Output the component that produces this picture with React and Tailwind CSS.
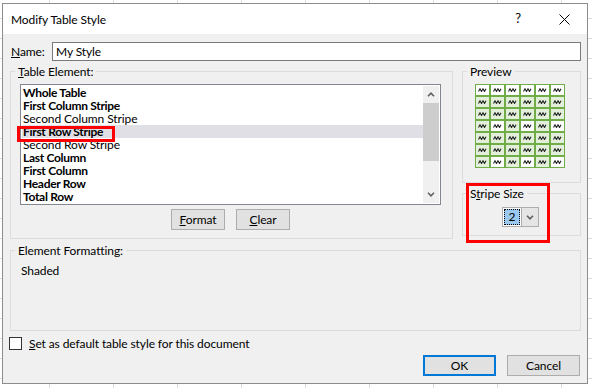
import React from "react";

const items = [
  { t: "Whole Table", b: true },
  { t: "First Column Stripe", b: true },
  { t: "Second Column Stripe", b: false },
  { t: "First Row Stripe", b: true, sel: true },
  { t: "Second Row Stripe", b: false },
  { t: "Last Column", b: true },
  { t: "First Column", b: true },
  { t: "Header Row", b: true },
  { t: "Total Row", b: true },
];

const rows = ["wwwwww", "gggggg", "gggggg", "gwgwgw", "gggggg", "gggggg", "gwgwgw"];

function Zig() {
  return (
    <svg width="9" height="4" viewBox="0 0 9 4" className="block">
      <path d="M0.5 3.5 L2 0.8 L3.5 3.5 L5 0.8 L6.5 3.5 L8 0.8" fill="none" stroke="#222" strokeWidth="1.1" />
    </svg>
  );
}

function Chevron({ up }) {
  return (
    <svg width="8" height="5" viewBox="0 0 8 5" className="block">
      <path d={up ? "M1 4.2 L4 1.2 L7 4.2" : "M1 0.8 L4 3.8 L7 0.8"} fill="none" stroke="#606060" strokeWidth="1.6" />
    </svg>
  );
}

function Btn({ children, className }) {
  return (
    <div className={"h-[21px] bg-[#e1e1e1] flex items-center justify-center " + className}>{children}</div>
  );
}

export default function App() {
  return (
    <div className="w-[592px] h-[388px] overflow-hidden bg-white bg-[image:linear-gradient(to_right,#dadada_1px,transparent_1px),linear-gradient(to_bottom,#dadada_1px,transparent_1px)] bg-[size:64px_20px] bg-[position:49px_18px] pt-[3px] pl-[2px] font-['Lato','Liberation_Sans',Arial,sans-serif] text-[12px] tracking-[-0.1px] text-black">
      <div className="relative w-[586px] h-[381px] border border-[#8c8c8c] bg-[#f0f0f0] flex flex-col">
        {/* title bar */}
        <div className="h-[30px] bg-white flex items-center">
          <div className="pl-[8px] leading-[15px]">Modify Table Style</div>
          <div className="ml-auto flex h-full">
            <div className="w-[46px] h-full flex items-center justify-center text-[13px]">?</div>
            <div className="w-[46px] h-full flex items-center justify-center">
              <svg width="11" height="11" viewBox="0 0 11 11" className="block">
                <path d="M0.5 0.5 L10.5 10.5 M10.5 0.5 L0.5 10.5" stroke="#000" strokeWidth="1" />
              </svg>
            </div>
          </div>
        </div>

        {/* body */}
        <div className="flex-1 flex flex-col pl-[7px] pr-[6px]">
          {/* name row */}
          <div className="mt-[8px] flex items-center h-[19px]">
            <div className="w-[42px] pl-[1px] leading-[15px]">
              <u>N</u>ame:
            </div>
            <div className="w-[529px] h-[19px] border border-[#7a7a7a] bg-white pl-[3px] leading-[17px]">My Style</div>
          </div>

          {/* main row */}
          <div className="mt-[3px] flex items-start">
            <fieldset className="w-[443px] h-[175px] border border-[#dcdcdc] m-0 p-0 min-w-0">
              <legend className="ml-[4px] px-[3px] leading-[15px]">
                <u>T</u>able Element:
              </legend>
              <div className="ml-[9px] mt-[5px] w-[421px] h-[121px] border border-[#828790] bg-white p-[1px] flex">
                <div className="flex-1 flex flex-col">
                  {items.map((it) => (
                    <div
                      key={it.t}
                      className={
                        "h-[13px] leading-[13px] pl-[1px] whitespace-nowrap " +
                        (it.sel ? "bg-[#dfdfe5] " : "") +
                        (it.b ? "font-bold tracking-[-0.3px]" : "font-normal")
                      }
                    >
                      {it.t}
                    </div>
                  ))}
                </div>
                <div className="w-[16px] bg-[#f0f0f0] flex flex-col">
                  <div className="h-[17px] flex items-center justify-center">
                    <Chevron up />
                  </div>
                  <div className="h-[58px] bg-[#cdcdcd]"></div>
                  <div className="flex-1"></div>
                  <div className="h-[17px] flex items-center justify-center">
                    <Chevron />
                  </div>
                </div>
              </div>
              <div className="ml-[9px] w-[421px] mt-[4px] flex justify-center gap-[11px]">
                <Btn className="w-[54px] border border-[#adadad]">
                  <span>
                    <u>F</u>ormat
                  </span>
                </Btn>
                <Btn className="w-[54px] border border-[#adadad]">
                  <span>
                    <u>C</u>lear
                  </span>
                </Btn>
              </div>
            </fieldset>

            <div className="ml-[9px] flex flex-col">
              <fieldset className="w-[119px] h-[119px] border border-[#dcdcdc] m-0 p-0 min-w-0">
                <legend className="ml-[4px] px-[3px] leading-[15px]">Preview</legend>
                <div className="ml-[12px] mt-[5px] w-fit bg-[#70ad47] p-[1px] flex flex-col gap-[2px]">
                  {rows.map((r, i) => (
                    <div key={i} className="flex gap-[2px]">
                      {r.split("").map((c, j) => (
                        <div
                          key={j}
                          className={
                            "w-[13px] h-[10px] flex items-center justify-center " +
                            (c === "w" ? "bg-white" : "bg-[#e2efda]")
                          }
                        >
                          <Zig />
                        </div>
                      ))}
                    </div>
                  ))}
                </div>
              </fieldset>
              <fieldset className="w-[119px] h-[50px] mt-[3px] border border-[#dcdcdc] m-0 p-0 min-w-0">
                <legend className="ml-[4px] px-[3px] leading-[15px]">
                  S<u>t</u>ripe Size
                </legend>
                <div className="ml-[39px] mt-[6px] w-[37px] h-[20px] border border-[#adadad] bg-white flex">
                  <div className="m-[1px] w-[16px] bg-[#99c9ef] border border-dotted border-black flex items-center justify-center leading-[14px]">
                    2
                  </div>
                  <div className="ml-auto w-[17px] h-full bg-[#e5e5e5] border-l border-[#adadad] flex items-center justify-center">
                    <Chevron />
                  </div>
                </div>
              </fieldset>
            </div>
          </div>

          {/* element formatting */}
          <fieldset className="mt-[4px] w-[571px] h-[88px] border border-[#dcdcdc] m-0 p-0 min-w-0">
            <legend className="ml-[4px] px-[3px] leading-[15px]">Element Formatting:</legend>
            <div className="mt-[5px] ml-[10px] leading-[15px]">Shaded</div>
          </fieldset>

          {/* checkbox */}
          <div className="mt-[6px] h-[13px] flex items-center -ml-px">
            <div className="w-[13px] h-[13px] border border-[#333333] bg-white"></div>
            <div className="ml-[7px] leading-[15px]">
              <u>S</u>et as default table style for this document
            </div>
          </div>

          {/* buttons */}
          <div className="mt-[5px] flex justify-end gap-[11px] pr-[1px]">
            <Btn className="w-[73px] border-2 border-[#0078d7]">OK</Btn>
            <Btn className="w-[73px] border border-[#adadad]">Cancel</Btn>
          </div>
        </div>

        {/* annotation boxes */}
        <div className="absolute left-[14px] top-[122px] w-[98px] h-[16px] border-[3px] border-[#ff0000]"></div>
        <div className="absolute left-[463px] top-[179px] w-[84px] h-[60px] border-[3px] border-[#ff0000]"></div>
      </div>
    </div>
  );
}
